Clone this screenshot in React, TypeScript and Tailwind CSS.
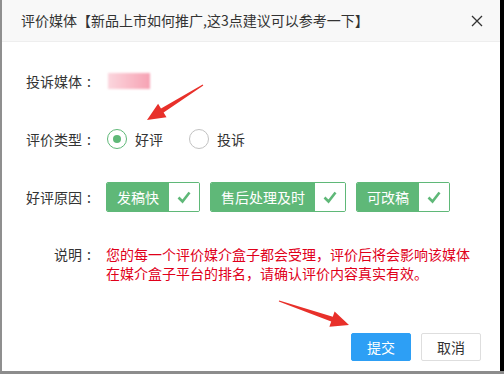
import { ReactNode } from "react";

const FONT = "font-['Microsoft_YaHei','Noto_Sans_CJK_SC',sans-serif]";

// label with a centered colon, like the original YaHei rendering
const Label = ({ text }: { text: string }) => (
  <div className="w-[80px] ml-[14px] text-right text-[14px] text-[#333] shrink-0">
    {text}
    <span className="inline-block w-[14px] text-center">:</span>
  </div>
);

const Row = ({ label, children }: { label: string; children: ReactNode }) => (
  <div className="flex h-[38px] items-center mb-[20px]">
    <Label text={label} />
    <div className="ml-[10px] flex items-center">{children}</div>
  </div>
);

const Radio = ({ checked, text }: { checked?: boolean; text: string }) => (
  <label className="flex items-center cursor-pointer">
    <span
      className={`w-[20px] h-[20px] rounded-full border flex items-center justify-center ${
        checked ? "border-[#5FB878]" : "border-[#c2c2c2]"
      }`}
    >
      {checked && <span className="w-[8px] h-[8px] rounded-full bg-[#5FB878]" />}
    </span>
    <span className="ml-[8px] text-[14px] text-[#333]">{text}</span>
  </label>
);

const Tag = ({ text }: { text: string }) => (
  <div className="flex h-[30px] border border-[#5FB878] rounded-[2px] overflow-hidden mr-[10px]">
    <span className="bg-[#5FB878] text-white text-[14px] px-[10px] flex items-center">{text}</span>
    <span className="w-[30px] bg-white flex items-center justify-center">
      <svg width="14" height="13" viewBox="0 0 14 13">
        <path d="M1.5 6.5 L5.5 10.5 L12.5 1.5" fill="none" stroke="#5FB878" strokeWidth="2.6" strokeLinejoin="miter" />
      </svg>
    </span>
  </div>
);

export default function App() {
  return (
    <div className={`relative w-[504px] h-[374px] bg-[#8c8c8c] overflow-hidden ${FONT}`}>
      <div className="flex h-[371px]">
        <div className="w-[2px] bg-[#8f8f8f]" />
        <div className="w-[498px] bg-white flex flex-col">
          {/* title */}
          <div className="h-[42px] bg-[#f8f8f8] border-b border-[#eee] flex items-center justify-between pl-[19px] pr-[17px]">
            <span className="text-[14px] text-[#333]">评价媒体【新品上市如何推广,这3点建议可以参考一下】</span>
            <svg width="12" height="12" viewBox="0 0 12 12">
              <path d="M1 1 L11 11 M11 1 L1 11" stroke="#333" strokeWidth="1.3" />
            </svg>
          </div>

          {/* form */}
          <div className="pt-[20px]">
            <Row label="投诉媒体">
              <div className="ml-[2px] w-[42px] h-[16px] bg-gradient-to-r from-[#fbd6de] to-[#f6a2b4] blur-[1px]" />
            </Row>
            <Row label="评价类型">
              <div className="flex items-center ml-[1px]">
                <Radio checked text="好评" />
                <div className="ml-[26px]">
                  <Radio text="投诉" />
                </div>
              </div>
            </Row>
            <Row label="好评原因">
              <Tag text="发稿快" />
              <Tag text="售后处理及时" />
              <Tag text="可改稿" />
            </Row>
            <div className="flex pt-[9px] leading-[19px] text-[14px]">
              <Label text="说明" />
              <div className="ml-[10px] text-[#e0001a]">
                <div>您的每一个评价媒介盒子都会受理，评价后将会影响该媒体</div>
                <div>在媒介盒子平台的排名，请确认评价内容真实有效。</div>
              </div>
            </div>
          </div>

          {/* buttons */}
          <div className="mt-auto flex justify-end gap-[10px] pr-[19px] pb-[10px]">
            <button className="w-[60px] h-[28px] bg-[#2D9FF5] border border-[#2D9FF5] text-white text-[14px] rounded-[2px]">
              提交
            </button>
            <button className="w-[60px] h-[28px] bg-white border border-[#dedede] text-[#333] text-[14px] rounded-[2px]">
              取消
            </button>
          </div>
        </div>
        <div className="flex-1 bg-black" />
      </div>

      {/* annotation arrows */}
      <svg className="absolute left-0 top-0 pointer-events-none" width="504" height="374">
        <polygon
          points="202.7,84.6 161,108.4 158.1,103.7 147,120 166.5,117.3 163.6,112.6 203.3,85.4"
          fill="#e8302a"
        />
        <polygon
          points="279.2,300.5 332.8,316.8 334.6,311.6 349,325 329.4,326.8 331.2,321.6 278.8,301.5"
          fill="#e8302a"
        />
      </svg>
    </div>
  );
}
